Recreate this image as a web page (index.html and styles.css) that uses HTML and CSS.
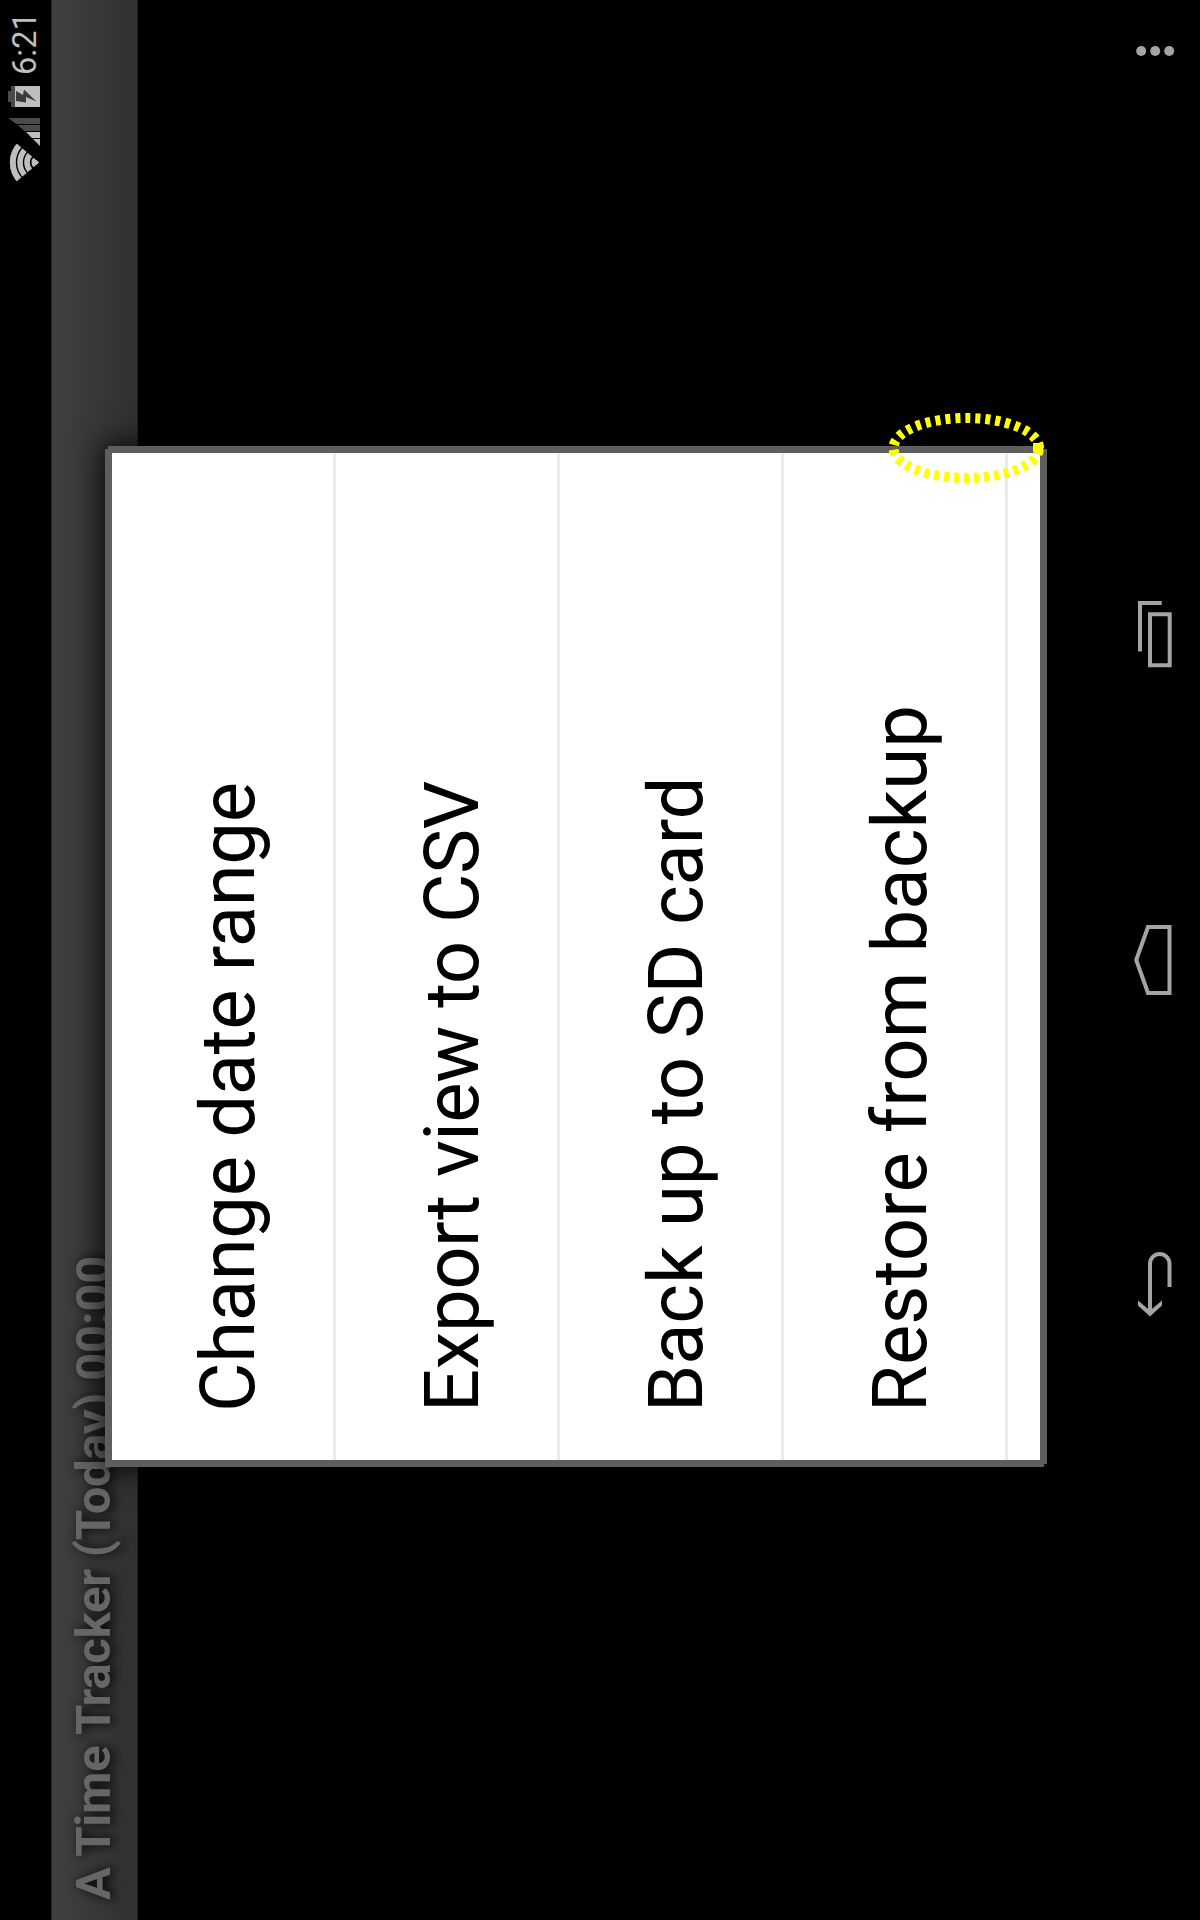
FILE: index.html
```html
<!DOCTYPE html>
<html lang="en">
<head>
<meta charset="utf-8">
<title>A Time Tracker</title>
<link rel="stylesheet" href="styles.css">
</head>
<body>
<div class="viewport">
<div class="device">
  <header class="status">
    <svg class="status-icons" width="98" height="34" viewBox="1737 7 98 34">
      <defs><clipPath id="fan"><path d="M1757.5 39 L1732 9 V0 H1783 V9 Z"/></clipPath></defs>
      <g clip-path="url(#fan)" fill="none" stroke="#bebebe">
        <circle cx="1757.5" cy="39" r="4" fill="#bebebe" stroke-width="7"/>
        <circle cx="1757.5" cy="39" r="12" stroke-width="5.6"/>
        <circle cx="1757.5" cy="39" r="19" stroke-width="5.6"/>
        <circle cx="1757.5" cy="39" r="26.2" stroke-width="6"/>
      </g>
      <path fill="#bebebe" d="M1774 40 L1781 33 V40 Z M1782 40 V32 L1788 26 V40 Z"/>
      <path fill="#4a4a4a" d="M1789 40 V24.500 L1795 17.500 V40 Z M1796 40 V16 L1802 8.500 V40 Z"/>
      <path fill="#4a4a4a" d="M1813 15 V11 H1818 V8 H1829 V11 H1834 V15 Z"/>
      <path fill="#bebebe" d="M1813 15 H1834 V40 H1813 Z"/>
      <path fill="#3c3c3c" d="M1818.500 36.500 L1830.500 24 L1825 23 L1829 16 H1819 L1817.500 26 H1823 Z"/>
    </svg>
    <span class="clock">6:21</span>
  </header>
  <div class="action-bar"><h1 class="title">A Time Tracker (Today) 00:00</h1></div>
  <main class="content"></main>
  <nav class="nav">
    <svg class="nav-back" width="70" height="44" viewBox="602 1132 70 44">
      <path d="M608 1150 H656.300 A9.750 9.750 0 0 1 656.300 1169.500 H633"/>
      <path class="solid" d="M603.500 1150 L614.500 1138 H619.500 L609.500 1150 L619.500 1162 H614.500 Z"/>
    </svg>
    <svg class="nav-home" width="74" height="44" viewBox="923 1132 74 44">
      <path d="M927 1169.500 V1148 L960 1136.200 L993 1148 V1169.500 Z"/>
    </svg>
    <svg class="nav-recent" width="70" height="44" viewBox="1250 1132 70 44">
      <path d="M1254.700 1150 H1305.700 V1169.700 H1254.700 Z M1268.500 1140 H1317 V1161.700"/>
    </svg>
    <svg class="nav-more" width="12" height="44" viewBox="1863 1132 12 44">
      <g class="solid"><circle cx="1869" cy="1141.200" r="5"/><circle cx="1869" cy="1155.200" r="5"/><circle cx="1869" cy="1169.200" r="5"/></g>
    </svg>
  </nav>
  <div class="dialog">
    <ul class="menu">
      <li class="item change">Change date range</li>
      <li class="item export">Export view to CSV</li>
      <li class="item backup">Back up to SD card</li>
      <li class="item restore">Restore from backup</li>
    </ul>
    <i class="corner tr"></i><i class="corner bl"></i><i class="corner br"></i>
  </div>
  <svg class="highlight" width="74" height="156" viewBox="1435 889 74 156">
    <path d="M1472 1039 A30 72.800 0 0 0 1502 966.300 A30 72.800 0 0 0 1472 893.500 A30 72.800 0 0 0 1442 966.300 A30 72.800 0 0 0 1472 1039"/>
    <path class="knot" d="M1466 1043 V1034 L1470 1033 H1477 V1043 Z"/>
  </svg>
</div>
</div>
</body>
</html>
```
FILE: styles.css
```css
* { box-sizing: border-box; }
html, body { margin: 0; background: #000; }
body { font-family: Roboto, sans-serif; }
.viewport { width: 1200px; height: 1920px; overflow: hidden; contain: paint; }

/* landscape screen, turned a quarter left */
.device {
  position: relative;
  display: flex;
  flex-direction: column;
  width: 1920px;
  height: 1200px;
  background: #000;
  transform-origin: 0 0;
  transform: translateY(1920px) rotate(-90deg);
}
svg { display: block; }

.status { height: 51px; display: flex; justify-content: flex-end; align-items: flex-start; padding: 7px 18px 0 0; }
.clock { width: 57px; margin-left: 10px; font-size: 32.500px; line-height: 37px; color: #bebebe; white-space: nowrap; }

.action-bar {
  height: 87px;
  padding-left: 20px;
  background: linear-gradient(#404040, #303030);
  border-top: 1px solid #242424;
  border-bottom: 1px solid #202020;
}
.title { margin: 0; font-size: 49px; line-height: 84px; font-weight: 700; letter-spacing: -.27px; color: #666; text-shadow: 0 4px 12px #000; white-space: nowrap; }
.content { flex: 1; }

.nav { height: 96px; display: flex; align-items: flex-start; padding: 28px 45px 0 602px; }
.nav svg { fill: none; stroke: #a4a4a4; stroke-width: 4; }
.nav .solid { fill: #a4a4a4; stroke: none; }
.nav-home { margin-left: 251px; }
.nav-recent { margin-left: 253px; }
.nav-more { margin-left: auto; }

.dialog {
  position: absolute;
  left: 453px;
  top: 105px;
  width: 1021px;
  height: 942px;
  border: 7px solid #5e5e5e;
  background: #fff;
  box-shadow: 0 0 26px 4px rgba(0, 0, 0, .75);
}
.menu { margin: 0; padding: 0; list-style: none; }
.item { height: 224px; padding: 71.500px 0 0 48px; border-bottom: 3px solid #ebebeb; font-size: 76px; line-height: 88px; color: #000; white-space: nowrap; }
.change { letter-spacing: -.33px; }
.export { letter-spacing: -.47px; }
.backup { letter-spacing: -.18px; }
.restore { letter-spacing: .09px; }
.corner { position: absolute; width: 3px; height: 3px; background: #0c0c0c; }
.tr { right: -7px; top: -7px; background: #262626; }
.bl { left: -7px; bottom: -7px; }
.br { right: -7px; bottom: -7px; }

.highlight { position: absolute; left: 1435px; top: 889px; fill: none; stroke: #ff0; stroke-width: 10; stroke-dasharray: 5 5; }
.highlight .knot { fill: #ff0; stroke: none; }
```
